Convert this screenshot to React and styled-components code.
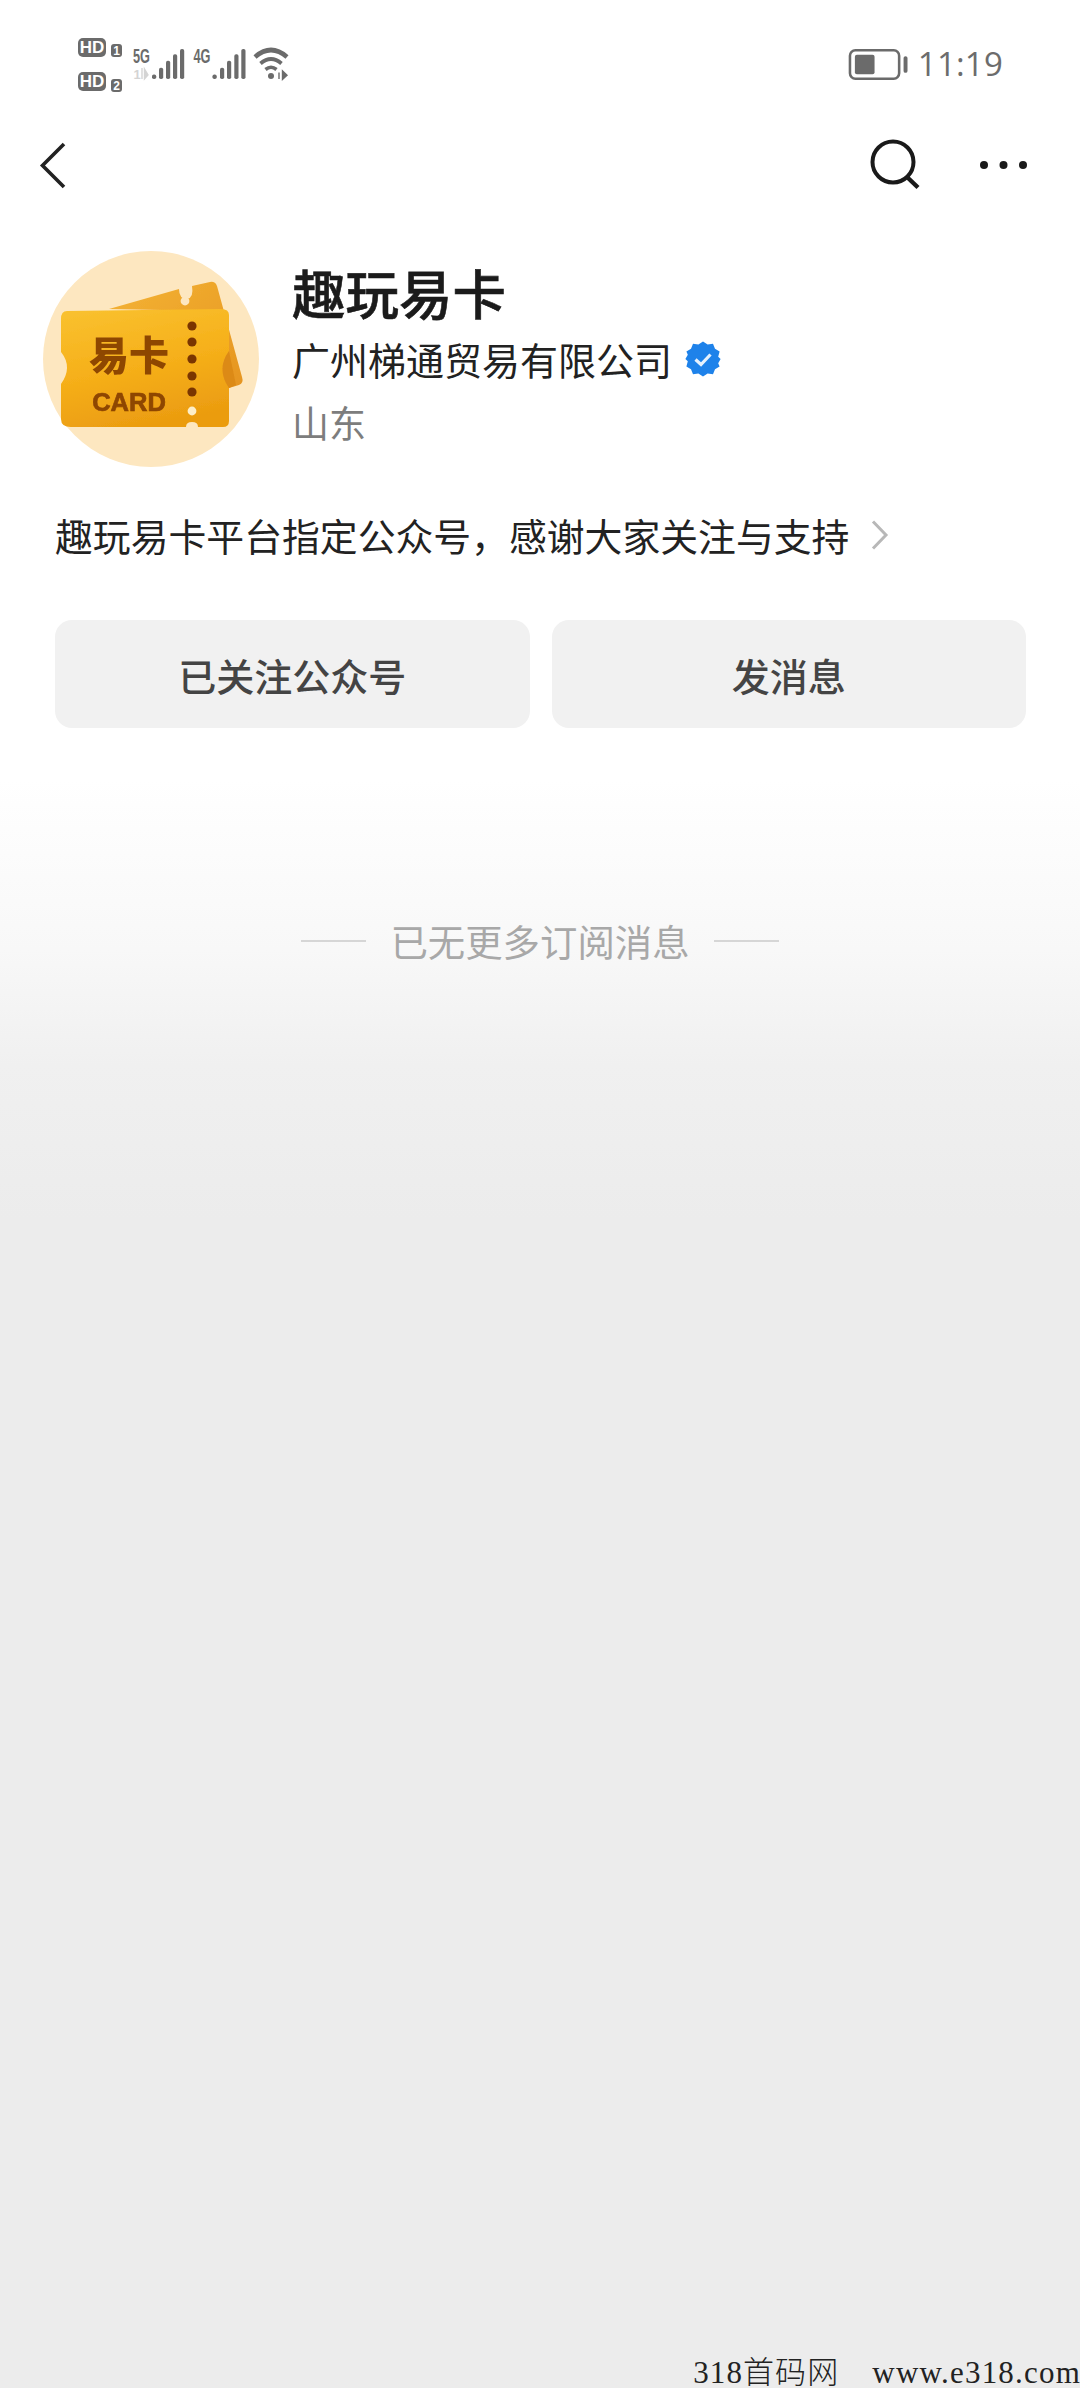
import React from "react";
import styled, { createGlobalStyle } from "styled-components";

const Global = createGlobalStyle`
  html, body { margin: 0; padding: 0; background: #ececec; }
  * { box-sizing: border-box; }
`;

const CJK = `"Noto Sans CJK SC", "Noto Sans", sans-serif`;

const Page = styled.div`
  width: 1080px;
  height: 2388px;
  display: flex;
  flex-direction: column;
  overflow: hidden;
  font-family: ${CJK};
  background: linear-gradient(180deg, #ffffff 0, #ffffff 780px, #f8f8f8 950px, #f0f0f0 1065px, #ececec 1220px, #ececec 100%);
`;

const StatusBar = styled.div`
  height: 110px;
  padding: 33px 77px 0 75px;
  display: flex;
  justify-content: space-between;
  align-items: flex-start;
`;

const StatusRight = styled.div`
  display: flex;
  align-items: center;
  gap: 10px;
  margin-top: 11px;
`;

const Clock = styled.span`
  font-family: "Open Sans", "Noto Sans", sans-serif;
  font-size: 33px;
  font-weight: 500;
  line-height: 40px;
  color: #6c6c6c;
  letter-spacing: 0.2px;
`;

const NavBar = styled.div`
  height: 110px;
  padding: 0 51px 0 38px;
  display: flex;
  align-items: center;
  justify-content: space-between;
`;

const NavActions = styled.div`
  display: flex;
  align-items: center;
  gap: 57px;
`;

const Profile = styled.div`
  padding: 31px 0 0 43px;
  display: flex;
  gap: 33px;
`;

const Avatar = styled.svg`
  width: 216px;
  height: 216px;
  flex: none;
`;

const Info = styled.div`
  display: flex;
  flex-direction: column;
  padding-top: 7px;
`;

const Title = styled.div`
  font-size: 53.5px;
  line-height: 68px;
  font-weight: 500;
  color: #1b1b1b;
  -webkit-text-stroke: 0.6px #1b1b1b;
`;

const Company = styled.div`
  display: flex;
  align-items: center;
  gap: 13px;
  font-size: 38px;
  line-height: 58px;
  margin-top: 4px;
  color: #222;
`;

const Region = styled.div`
  font-size: 37px;
  line-height: 56px;
  margin-top: 6px;
  color: #7d7d7d;
`;

const Description = styled.div`
  margin-top: 40px;
  padding-left: 55px;
  display: flex;
  align-items: center;
  gap: 22px;
  font-size: 37.85px;
  line-height: 56px;
  color: #222;
`;

const Buttons = styled.div`
  margin-top: 57px;
  padding: 0 54px 0 55px;
  display: grid;
  grid-template-columns: 1fr 1fr;
  gap: 22px;
`;

const ActionButton = styled.div`
  height: 108px;
  border-radius: 17px;
  background: #f1f1f1;
  display: flex;
  align-items: center;
  justify-content: center;
  font-size: 38px;
  font-weight: 500;
  color: #444;
`;

const EndNote = styled.div`
  margin-top: 183px;
  display: flex;
  align-items: center;
  justify-content: center;
  gap: 24px;
  font-size: 37.4px;
  line-height: 60px;
  color: #a8a8a8;
`;

const Rule = styled.span`
  width: 65px;
  height: 2px;
  background: #d6d6d6;
`;

const Watermark = styled.div`
  margin-top: auto;
  display: flex;
  justify-content: flex-end;
  gap: 33px;
  height: 31px;
  font-family: "Liberation Serif", "Noto Sans CJK SC", serif;
  font-size: 31px;
  font-weight: 300;
  line-height: 31px;
  color: #222;
  white-space: nowrap;
`;

const MarkName = styled.span`
  letter-spacing: 1.1px;
`;

const MarkUrl = styled.span`
  letter-spacing: 1.2px;
  margin-right: -1px;
`;

const BAR_TOPS = [74.5, 67.7, 60.7, 54.3, 49];

const SignalBars = ({ xs }) =>
  xs.map((x, i) => (
    <rect key={x} x={x} y={BAR_TOPS[i]} width="4.2" height={79 - BAR_TOPS[i]} rx="1.8" />
  ));

const StatusIcons = () => (
  <svg width="220" height="60" viewBox="75 33 220 60">
    <g fill="#6b6b6b">
      <rect x="78" y="38" width="28" height="19" rx="5" />
      <rect x="78" y="72" width="28" height="19" rx="5" />
      <rect x="111" y="44" width="11" height="13" rx="3" />
      <rect x="111" y="79" width="11" height="13" rx="3" />
      <SignalBars xs={[152, 159, 166, 173, 180]} />
      <SignalBars xs={[212.5, 220, 227, 234.3, 241.3]} />
      <circle cx="271" cy="76" r="3" />
      <path d="M279 72.5 l0 6.5 M282.5 71 l0 8.5 l4.5 -4.2 z" stroke="#6b6b6b" strokeWidth="1.4" fill="#6b6b6b" />
    </g>
    <g fontFamily="'Liberation Sans', sans-serif" fontWeight="700" textAnchor="middle">
      <text x="92" y="53" fontSize="17" fill="#fff">HD</text>
      <text x="92" y="87" fontSize="17" fill="#fff">HD</text>
      <text x="116.5" y="55" fontSize="12" fill="#fff">1</text>
      <text x="116.5" y="90" fontSize="12" fill="#fff">2</text>
      <text x="141.5" y="63" fontSize="19.5" fill="#6b6b6b" textLength="17" lengthAdjust="spacingAndGlyphs">5G</text>
      <text x="202" y="63" fontSize="19.5" fill="#6b6b6b" textLength="17" lengthAdjust="spacingAndGlyphs">4G</text>
      <text x="137" y="79" fontSize="13" fill="#d4d4d4">1</text>
    </g>
    <path d="M142 68 v11 M144.5 69 v10 l3.5 -4 z" stroke="#d4d4d4" strokeWidth="1.4" fill="#d4d4d4" />
    <g fill="none" stroke="#6b6b6b" strokeLinecap="butt">
      <path d="M255 57 Q271 43 287 57" strokeWidth="4.6" />
      <path d="M260.5 63.5 Q271 54.5 281.5 63.5" strokeWidth="3.8" />
      <path d="M265.5 69.5 Q271 65 276.5 69.5" strokeWidth="3.6" />
    </g>
  </svg>
);

const Battery = () => (
  <svg width="60" height="33" viewBox="848 48 61 33">
    <rect x="850" y="50" width="50" height="29" rx="5.5" fill="none" stroke="#6b6b6b" strokeWidth="2.6" />
    <rect x="855" y="54.5" width="20" height="20" rx="2" fill="#6b6b6b" />
    <rect x="904.5" y="56" width="4" height="17" rx="2" fill="#6b6b6b" />
  </svg>
);

const BackIcon = () => (
  <svg width="30" height="50" viewBox="38 139 30 50" fill="none" stroke="#222" strokeWidth="3.6">
    <path d="M64 143 L42.5 164.5 L64 186" />
  </svg>
);

const SearchIcon = () => (
  <svg width="54" height="54" viewBox="868 138 54 54" fill="none" stroke="#1a1a1a" strokeWidth="4">
    <circle cx="893" cy="162" r="20.5" />
    <path d="M907 177 L918 187.5" strokeWidth="4.4" />
  </svg>
);

const MoreIcon = () => (
  <svg width="50" height="10" viewBox="979 161 50 10" fill="#1a1a1a">
    <circle cx="984" cy="166" r="4" />
    <circle cx="1003.5" cy="166" r="4" />
    <circle cx="1023" cy="166" r="4" />
  </svg>
);

const Verified = () => (
  <svg width="36" height="36" viewBox="0 0 36 36">
    <path
      fill="#1e82ea"
      d="M18 0.5 L22.6 3.4 L28 2.8 L30 7.8 L34.6 10.5 L33.2 15.8 L35.6 18 L33.2 22.2 L34.6 25.5 L30 28.2 L28 33.2 L22.6 32.6 L18 35.5 L13.4 32.6 L8 33.2 L6 28.2 L1.4 25.5 L2.8 20.2 L0.4 18 L2.8 13.8 L1.4 10.5 L6 7.8 L8 2.8 L13.4 3.4 Z"
    />
    <path d="M10.5 18.5 L16 23.5 L25.5 13.5" fill="none" stroke="#e6f1fd" strokeWidth="3.2" />
  </svg>
);

const Chevron = () => (
  <svg width="18" height="30" viewBox="0 0 18 30" fill="none" stroke="#b8b8b8" strokeWidth="3">
    <path d="M2 1.5 L15 15 L2 28.5" />
  </svg>
);

const Logo = () => (
  <Avatar viewBox="0 0 216 216">
    <defs>
      <linearGradient id="front" x1="0.2" y1="0" x2="0.5" y2="1">
        <stop offset="0" stopColor="#f9c02e" />
        <stop offset="0.5" stopColor="#f6b01a" />
        <stop offset="1" stopColor="#eb9c10" />
      </linearGradient>
      <linearGradient id="back" x1="0" y1="0" x2="1" y2="1">
        <stop offset="0" stopColor="#f4b334" />
        <stop offset="1" stopColor="#e59420" />
      </linearGradient>
      <filter id="soft" x="-10%" y="-10%" width="120%" height="120%">
        <feGaussianBlur stdDeviation="0.7" />
      </filter>
    </defs>
    <circle cx="108" cy="108" r="108" fill="#fde7c0" />
    <g filter="url(#soft)">
      <path
        d="M66 58 L136 38 Q136 48 144 48 Q151 47 149 35 L167 31 Q172 30 174 35 L199 126 Q201 132 196 134 L176 140 L170 60 Z"
        fill="url(#back)"
      />
      <path
        d="M24 60 L178 58 Q186 58 186 64 V100 Q173 118 186 137 V170 Q186 176 180 176 H155 Q155 171 149 171 Q143 171 143 176 H28 Q18 176 18 168 V133 Q30 116 18 101 V68 Q18 60 24 60 Z"
        fill="url(#front)"
      />
      <path d="M186 100 Q173 118 186 137 L193 134 L186 100 Z" fill="#dc8a18" />
      {[75, 91, 108, 125, 141].map((y) => (
        <circle key={y} cx="149" cy={y} r="4.6" fill="#7a3604" />
      ))}
      <circle cx="149" cy="160" r="4.4" fill="#fdeec8" />
      <circle cx="142" cy="50" r="4.4" fill="#fde7c0" />
      <text x="86" y="119" textAnchor="middle" fontSize="40" fontWeight="900" fill="#8e4606" fontFamily={CJK}>易卡</text>
      <text x="86" y="160" textAnchor="middle" fontSize="25.5" fontWeight="700" fill="#8e4606" stroke="#8e4606" strokeWidth="0.7" fontFamily="'Liberation Sans', sans-serif">CARD</text>
    </g>
  </Avatar>
);

export default function App() {
  return (
    <Page>
      <Global />
      <StatusBar>
        <StatusIcons />
        <StatusRight>
          <Battery />
          <Clock>11:19</Clock>
        </StatusRight>
      </StatusBar>
      <NavBar>
        <BackIcon />
        <NavActions>
          <SearchIcon />
          <MoreIcon />
        </NavActions>
      </NavBar>
      <Profile>
        <Logo />
        <Info>
          <Title>趣玩易卡</Title>
          <Company>
            广州梯通贸易有限公司
            <Verified />
          </Company>
          <Region>山东</Region>
        </Info>
      </Profile>
      <Description>
        趣玩易卡平台指定公众号，感谢大家关注与支持
        <Chevron />
      </Description>
      <Buttons>
        <ActionButton>已关注公众号</ActionButton>
        <ActionButton>发消息</ActionButton>
      </Buttons>
      <EndNote>
        <Rule />
        已无更多订阅消息
        <Rule />
      </EndNote>
      <Watermark>
        <MarkName>318首码网</MarkName>
        <MarkUrl>www.e318.com</MarkUrl>
      </Watermark>
    </Page>
  );
}
